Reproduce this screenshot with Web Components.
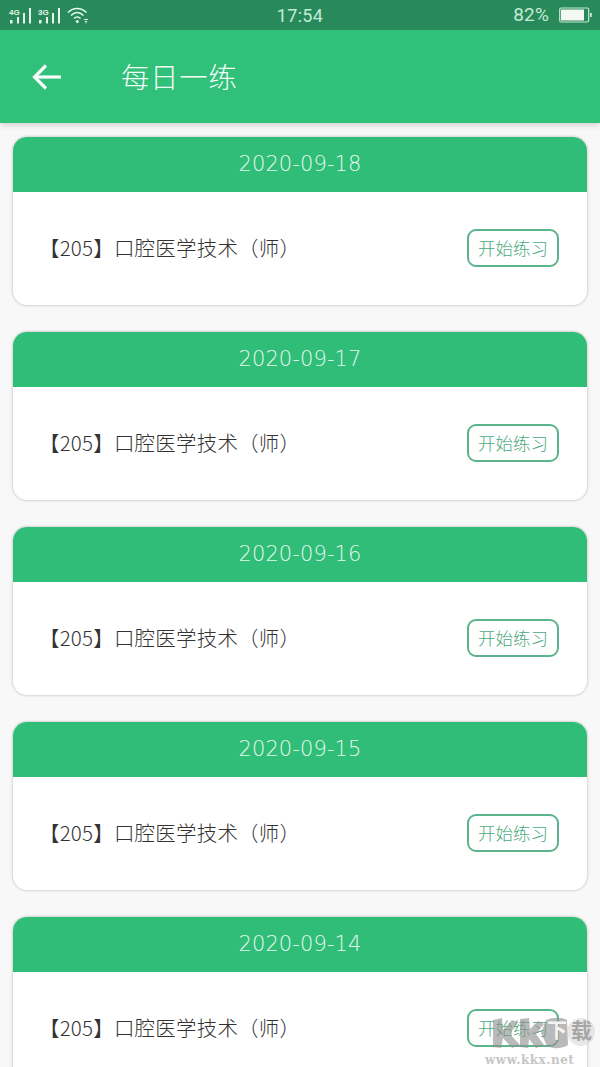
<!DOCTYPE html>
<html><head><meta charset="utf-8">
<style>
html,body{margin:0;padding:0;height:1067px;overflow:hidden;background:#f8f8f8;font-family:"Noto Sans CJK SC","Noto Sans",sans-serif}
</style></head><body>
<phone-screen>
<status-bar slot="top"></status-bar>
<app-bar slot="top" title="每日一练"></app-bar>
<practice-card date="2020-09-18"></practice-card>
<practice-card date="2020-09-17"></practice-card>
<practice-card date="2020-09-16"></practice-card>
<practice-card date="2020-09-15"></practice-card>
<practice-card date="2020-09-14"></practice-card>
</phone-screen>
<kkx-mark></kkx-mark>
<script>
function def(name,html,attrs){
  customElements.define(name,class extends HTMLElement{
    connectedCallback(){
      if(this.shadowRoot)return;
      let h=html;
      (attrs||[]).forEach(a=>{h=h.split('{{'+a+'}}').join(this.getAttribute(a)||'')});
      this.attachShadow({mode:'open'}).innerHTML=h;
    }
  });
}
def('phone-screen',`<style>
:host{display:block;width:600px;height:1067px;overflow:hidden;position:relative}
.top{position:relative;z-index:2}
.list{display:flex;flex-direction:column;gap:27px;padding:14px 13px 0}
</style><div class="top"><slot name="top"></slot></div><div class="list"><slot></slot></div>`);
def('status-bar',`<style>
:host{display:flex;align-items:center;height:30px;background:#288a5b;color:#c4ead6;font:18px/30px Roboto,sans-serif;position:relative}
.l{display:flex;align-items:center;gap:4px;padding-left:9px;width:120px;box-sizing:border-box;margin-top:-1px}
.c{position:absolute;left:0;right:0;top:1px;text-align:center;letter-spacing:.3px}
.r{margin-left:auto;display:flex;align-items:center;gap:10px;padding-right:8px}
.r span{font-size:19px;letter-spacing:.2px}
svg{display:block}
text{font:700 8px "Liberation Sans",sans-serif;fill:#e4f6ec}
</style>
<div class="l">
<svg width="25" height="18" viewBox="0 0 25 18"><text x="0" y="9">4G</text><g fill="#e4f6ec"><rect x="1" y="14" width="2.500" height="3.500"/><rect x="8" y="11" width="2" height="6.500"/><rect x="14" y="7" width="2" height="10.500"/><rect x="20" y="2" width="2" height="15.500"/></g></svg>
<svg width="25" height="18" viewBox="0 0 25 18"><text x="0" y="9">3G</text><g fill="#e4f6ec"><rect x="1" y="14" width="2.500" height="3.500"/><rect x="8" y="11" width="2" height="6.500"/><rect x="14" y="7" width="2" height="10.500"/><rect x="20" y="2" width="2" height="15.500"/></g></svg>
<svg width="22" height="18" viewBox="0 0 22 18" fill="none" stroke="#e4f6ec" stroke-width="1.500"><path d="M1 6.500C6 1 14 1 19.500 6.500"/><path d="M4 9.500C8 5.500 12.500 5.500 16.500 9.500"/><path d="M7 12.500C9 10.700 11.500 10.700 13.500 12.500"/><circle cx="10.300" cy="15.500" r="1.500" fill="#e4f6ec" stroke="none"/><path d="M17 13.500h4M17.800 15.500h2.400M18.500 17h1" stroke-width="1"/></svg>
</div>
<div class="c">17:54</div>
<div class="r"><span>82%</span>
<svg width="33" height="16" viewBox="0 0 33 16"><rect x=".7" y="1" width="29" height="14" rx="1.500" fill="none" stroke="#c4ead6" stroke-width="1.200"/><rect x="2" y="2.500" width="23" height="11" fill="#f4f8f2"/><rect x="31" y="6" width="1.800" height="4" fill="#c4ead6"/></svg>
</div>`);
def('app-bar',`<style>
:host{display:flex;align-items:center;height:93px;background:#30c07a;color:#f2fbf6;box-shadow:0 2px 6px rgba(0,0,0,.16);font:400 28.500px/40px "Noto Sans CJK SC",sans-serif}
svg{display:block;margin-left:32px;margin-top:1px}
.t{margin-left:59px;margin-top:-2px;letter-spacing:.6px;font-weight:300}
</style>
<svg width="30" height="28" viewBox="0 0 30 28" fill="none" stroke="#f6fcf8" stroke-width="3.200"><path d="M29 14H3"/><path d="M14 2.500 2.500 14 14 25.500"/></svg>
<div class="t">{{title}}</div>`,['title']);
def('practice-card',`<style>
:host{display:block;height:168px;background:#fff;border-radius:14px;box-shadow:0 0 3px rgba(0,0,0,.3);overflow:hidden;flex:none}
.h{height:55px;background:#30bd78;color:#e4f8ee;text-align:center;font:200 21px/54px "DejaVu Sans","Noto Sans",sans-serif;letter-spacing:.1px}
.b{height:113px;display:flex;align-items:center;justify-content:space-between;padding:0 28px 0 26px;box-sizing:border-box;margin-top:-1px}
.n{font:300 20.500px/28px "Noto Sans CJK SC",sans-serif;color:#333;margin-top:-1px;letter-spacing:.2px}
</style>
<div class="h">{{date}}</div>
<div class="b"><div class="n">【205】口腔医学技术（师）</div><start-button>开始练习</start-button></div>`,['date']);
def('start-button',`<style>
:host{display:block;width:92px;height:38px;box-sizing:border-box;border:2px solid #5cb48c;border-radius:9px;color:#4aa97c;text-align:center;font:300 17.500px/34px "Noto Sans CJK SC",sans-serif;background:#fff;margin-top:1px}
</style><slot></slot>`);
def('kkx-mark',`<style>
:host{display:block;position:absolute;left:480px;top:1012px;width:120px;height:55px;pointer-events:none;z-index:5}
svg{position:absolute;left:0;top:0}
.s{position:absolute;font-family:"Noto Sans CJK SC",sans-serif;font-weight:700;line-height:1}
.c{left:67px;top:8px;font-size:20px;color:#f4f4f4}
.d{left:91px;top:7px;font-size:21px;color:#a6a6a6}
.u{position:absolute;left:5px;top:41px;font:700 12px/14px "DejaVu Serif",serif;color:#c6c6c6;letter-spacing:.5px;white-space:nowrap}
</style>
<svg width="120" height="45" viewBox="0 0 120 45"><g fill="#8f8f8f" fill-opacity=".62">
<path d="M13 8l9-2 1 12 9-10 6 2-8 12 10 11-8 3-9-10-2 10-8-1z"/>
<path d="M40 7l9-1 1 11 8-8 6 3-8 10 8 11-8 3-7-9-1 9-8-1z"/>
<path d="M66 8c7-3 16-3 21 0l1 25c-6 4-15 4-21 1l-6-13z"/>
</g><circle cx="101" cy="20" r="14" fill="#d6d6d6" fill-opacity=".55"/></svg>
<span class="s c">下</span><span class="s d">载</span><span class="u">www.kkx.net</span>`);
</script>
</body></html>
